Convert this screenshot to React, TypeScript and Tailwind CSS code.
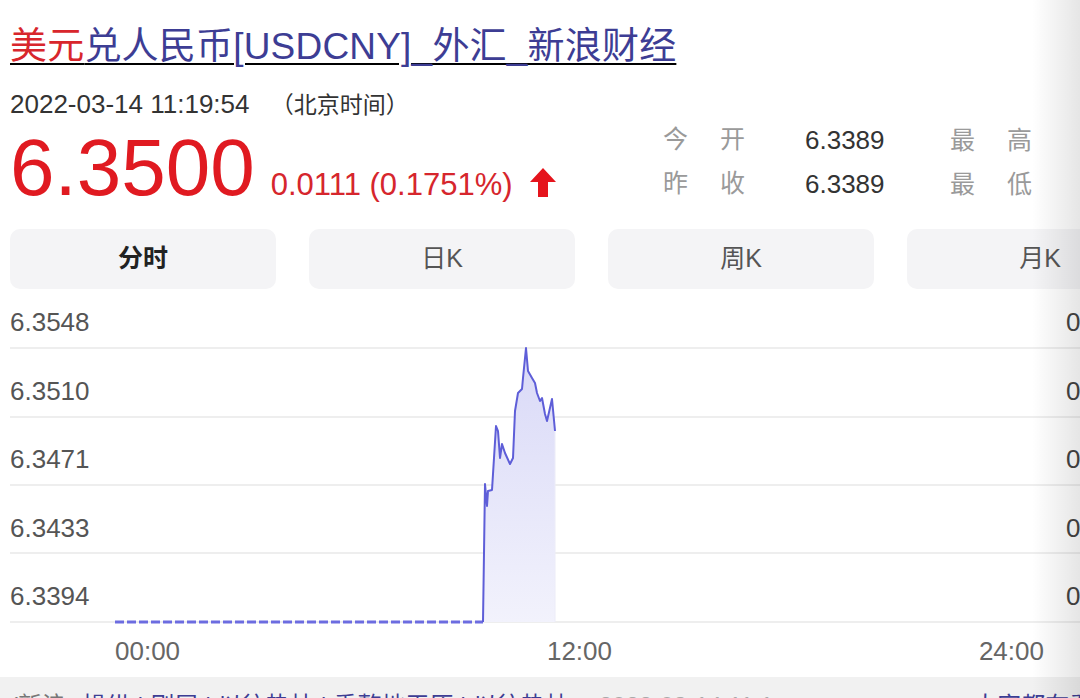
import React from 'react';

const yLabels = ['6.3548', '6.3510', '6.3471', '6.3433', '6.3394'];
const pctLabels = ['0.25%', '0.19%', '0.13%', '0.07%', '0.01%'];
const tabs = ['分时', '日K', '周K', '月K'];

// chart points in page coords; chart box starts at y=296
const raw: [number, number][] = [
  [483, 621], [485, 483], [487, 505], [488, 490], [492, 489], [496, 425], [498, 430],
  [500, 457], [502, 443], [505, 452], [510, 463], [513, 457], [515, 410], [518, 392],
  [522, 388], [523, 377], [526, 347], [528, 370], [532, 377], [535, 382], [537, 392],
  [540, 400], [542, 397], [545, 413], [547, 420], [552, 398], [555, 430],
];
const pts = raw.map(([x, y]) => `${x},${y - 296}`).join(' ');
const area = `483,325 ${pts} 555,325`;
const gridY = [51, 120, 188, 256, 325];

function Stat({ a, b, value }: { a: string; b: string; value: string }) {
  return (
    <div className="flex items-center h-[44px] text-[25px]">
      <div className="w-[82px] flex justify-between text-[#9a9a9a]">
        <span>{a}</span>
        <span>{b}</span>
      </div>
      <div className="ml-[60px] w-[145px] text-[#333] text-[26px]">{value}</div>
    </div>
  );
}

export default function App() {
  return (
    <div className="relative w-[1080px] h-[698px] overflow-hidden bg-white font-['Liberation_Sans','Noto_Sans_CJK_SC',sans-serif]">
      <div className="pl-[10px] pt-[25px] w-[1300px]">
        {/* title */}
        <h1 className="text-[37px] leading-[44px] tracking-[0.2px] underline underline-offset-[4px] decoration-[1.5px] whitespace-nowrap">
          <span className="text-[#d8262c]">美元</span>
          <span className="text-[#3d3d94]">兑人民币[USDCNY]_外汇_新浪财经</span>
        </h1>

        {/* header */}
        <div className="flex mt-[20px]">
          <div className="w-[653px] shrink-0">
            <div className="text-[26px] leading-[30px] text-[#333] whitespace-nowrap">
              2022-03-14 11:19:54 <span className="text-[23px] ml-[14px]">（北京时间）</span>
            </div>
            <div className="flex items-baseline mt-[9px] h-[78px]">
              <span className="text-[80px] leading-[78px] text-[#e01a21]">6.3500</span>
              <span className="text-[31px] text-[#d6262d] ml-[16px]">0.0111 (0.1751%)</span>
              <svg width="28" height="31" viewBox="0 0 28 31" className="ml-[16px] self-end mb-[9px]">
                <path d="M14 1 L27 15 L19 15 L19 30 L9 30 L9 15 L1 15 Z" fill="#e5141c" />
              </svg>
            </div>
          </div>
          <div className="pt-[29px]">
            <div className="flex">
              <Stat a="今" b="开" value="6.3389" />
              <div className="w-[82px] flex justify-between text-[25px] leading-[44px] text-[#9a9a9a]">
                <span>最</span>
                <span>高</span>
              </div>
            </div>
            <div className="flex">
              <Stat a="昨" b="收" value="6.3389" />
              <div className="w-[82px] flex justify-between text-[25px] leading-[44px] text-[#9a9a9a]">
                <span>最</span>
                <span>低</span>
              </div>
            </div>
          </div>
        </div>

        {/* tabs */}
        <div className="flex gap-[33px] mt-[22px]">
          {tabs.map((t, i) => (
            <div
              key={t}
              className={
                'w-[266px] h-[60px] shrink-0 rounded-[10px] bg-[#f4f4f6] flex items-center justify-center text-[25px] ' +
                (i === 0 ? 'font-bold text-[#222]' : 'text-[#555]')
              }
            >
              {t}
            </div>
          ))}
        </div>

        {/* chart */}
        <div className="relative mt-[8px] w-[1200px]">
          <svg className="absolute left-[-10px] top-0" width="1210" height="340">
            <defs>
              <linearGradient id="fill" x1="0" y1="0" x2="0" y2="1">
                <stop offset="0" stopColor="#d9d9f7" />
                <stop offset="1" stopColor="#f2f2fc" />
              </linearGradient>
            </defs>
            {gridY.map((y) => (
              <line key={y} x1="10" x2="1210" y1={y} y2={y} stroke="#eeeeee" strokeWidth="2" />
            ))}
            <polygon points={area} fill="url(#fill)" />
            <line x1="555" x2="555" y1="134" y2="325" stroke="#ececf8" strokeWidth="1" />
            <line x1="115" x2="483" y1="325" y2="325" stroke="#6c6ce0" strokeWidth="3" strokeDasharray="9 3" />
            <polyline points={pts} fill="none" stroke="#5e5ed8" strokeWidth="2" strokeLinejoin="round" />
          </svg>
          <div className="relative flex">
            <div className="w-[1056px] flex flex-col pt-[10px] gap-[38.5px]">
              {yLabels.map((l) => (
                <div key={l} className="text-[26px] leading-[30px] text-[#555]">{l}</div>
              ))}
            </div>
            <div className="flex flex-col pt-[10px] gap-[38.5px]">
              {pctLabels.map((l) => (
                <div key={l} className="text-[26px] leading-[30px] text-[#444]">{l}</div>
              ))}
            </div>
          </div>
          <div className="relative w-[1034px] pl-[105px] flex justify-between mt-[25px] text-[26px] leading-[30px] text-[#666]">
            <span>00:00</span>
            <span>12:00</span>
            <span>24:00</span>
          </div>
        </div>
      </div>

      {/* bottom strip */}
      <div className="mt-[11px] h-[40px] bg-[#f1f1f1] pl-[10px] pt-[14px] text-[24px] leading-[30px] whitespace-nowrap">
        <span className="text-[#777]">(新浪:</span>
        <span className="text-[#3d3d94] ml-[10px]">操纵 | 刷屏 | 以往热帖 | 重整地平原 | 以往热帖</span>
        <span className="text-[#aaa] ml-[30px]">2022-03-14 11:1</span>
        <span className="text-[#3d3d94] ml-[200px]">大家都在看</span>
      </div>

      {/* right edge shade */}
      <div className="absolute top-0 right-0 h-full w-[48px] bg-gradient-to-r from-transparent to-black/10 pointer-events-none" />
    </div>
  );
}
